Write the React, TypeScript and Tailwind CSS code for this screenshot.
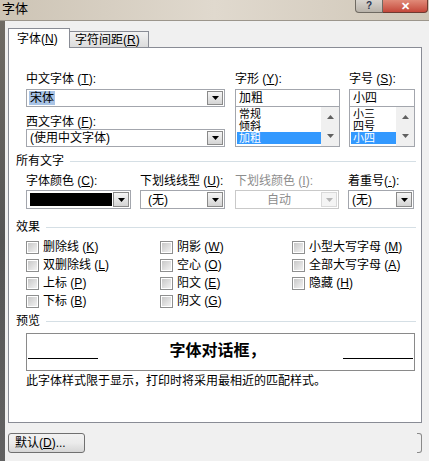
import type { ReactNode } from "react"

function Key({ k }: { k: string }) {
  return (
    <span>
      {" "}(<span className="underline">{k}</span>)
    </span>
  )
}

function Arrow({ disabled = false }: { disabled?: boolean }) {
  return (
    <div
      className={`flex h-full w-[16px] items-center justify-center border ${
        disabled
          ? "border-[#d9d9d9] bg-[#f4f4f4]"
          : "border-[#8a8a8a] bg-gradient-to-b from-[#f6f6f6] to-[#d4d4d4]"
      }`}
    >
      <svg width="7" height="4" viewBox="0 0 7 4">
        <path d="M0 0h7L3.5 4z" fill={disabled ? "#b5b5b5" : "#000"} />
      </svg>
    </div>
  )
}

function Combo({
  className,
  children,
  disabled = false,
}: {
  className: string
  children: ReactNode
  disabled?: boolean
}) {
  return (
    <div
      className={`flex items-stretch border bg-white p-px ${
        disabled ? "border-[#c9c9c9]" : "border-[#a3a6ad]"
      } ${className}`}
    >
      <div className="flex min-w-0 flex-1 items-center">{children}</div>
      <Arrow disabled={disabled} />
    </div>
  )
}

function ListBox({ items, selected, className }: { items: string[]; selected: number; className: string }) {
  return (
    <div className={`flex border border-[#a3a6ad] bg-white ${className}`}>
      <div className="flex-1 pt-[1px] pl-px">
        {items.map((it, i) => (
          <div
            key={it}
            className={`h-[12px] pl-[2px] text-[11px] leading-[12px] ${i === selected ? "bg-[#3399ff] text-white" : ""}`}
          >
            {it}
          </div>
        ))}
      </div>
      <div className="flex w-[18px] flex-col items-center justify-between bg-[#f0f0f0] py-[8px]">
        <svg width="7" height="4" viewBox="0 0 7 4">
          <path d="M0 4h7L3.5 0z" fill="#606060" />
        </svg>
        <svg width="7" height="4" viewBox="0 0 7 4">
          <path d="M0 0h7L3.5 4z" fill="#606060" />
        </svg>
      </div>
    </div>
  )
}

function Section({ label }: { label: string }) {
  return (
    <div className="flex h-[14px] items-center">
      <span className="leading-[14px]">{label}</span>
      <div className="ml-[6px] h-px flex-1 bg-[#d5dfe5]" />
    </div>
  )
}

function Check({ label, k }: { label: string; k: string }) {
  return (
    <div className="flex h-[18px] items-center">
      <div className="flex h-[13px] w-[13px] items-center justify-center border border-[#8e8f8f] bg-white">
        <div className="h-[9px] w-[9px] bg-gradient-to-br from-[#c8c8c8] to-[#f2f2f2]" />
      </div>
      <span className="ml-[4px] leading-[14px]">
        {label}
        <Key k={k} />
      </span>
    </div>
  )
}

export default function App() {
  return (
    <div className="relative h-[461px] w-[429px] overflow-hidden bg-[#f0f0f0] font-['Liberation_Sans','Noto_Sans_CJK_SC',sans-serif] text-[12px] text-black">
      {/* title bar */}
      <div className="flex h-[21px] items-start border-b border-[#9c968c] bg-gradient-to-r from-[#cdc4b5] via-[#e0d9ce] to-[#d0c7b8]">
        <span className="mt-[1px] pl-[2px] text-[13px] leading-[16px]">字体</span>
        <div className="ml-auto mr-[1px] flex h-[13px]">
          <div className="flex w-[28px] items-center justify-center rounded-bl-[4px] border border-t-0 border-[#6f6a62] bg-gradient-to-b from-[#d8d4ce] to-[#b9b3aa] text-[10px] font-bold leading-[10px] text-[#2a3550]">
            ?
          </div>
          <div className="flex w-[45px] items-center justify-center rounded-br-[4px] border border-l-0 border-t-0 border-[#6f3a30] bg-gradient-to-b from-[#e08a78] to-[#c4473a] text-[11px] font-bold leading-[10px] text-white">
            ✕
          </div>
        </div>
      </div>

      <div className="flex h-[440px]">
        <div className="w-[5px] bg-gradient-to-b from-[#6f6b64] via-[#555555] to-[#626262]" />
        <div className="flex-1 pl-[3px]">
          {/* tabs */}
          <div className="relative z-10 mt-[7px] flex h-[20px] items-end">
            <div className="flex h-[20px] w-[62px] items-center border border-b-0 border-[#898c95] bg-white pl-[8px] leading-[14px]">
              字体<Key k="N" />
            </div>
            <div className="flex h-[17px] w-[79px] items-center border border-l-0 border-[#898c95] bg-gradient-to-b from-[#f2f2f2] to-[#dcdcdc] pl-[5px] leading-[14px]">
              字符间距<Key k="R" />
            </div>
          </div>

          {/* panel */}
          <div className="-mt-px h-[376px] w-[414px] border border-[#898c95] bg-white pr-[5px] pl-[7px] pt-[24px]">
            <div className="ml-[10px] flex">
              <div className="w-[199px]">
                <div className="leading-[14px]">
                  中文字体<Key k="T" />:
                </div>
                <Combo className="mt-[3px] h-[18px] w-[199px]">
                  <span className="ml-px bg-[#a9c4e6] px-[1px] leading-[14px]">宋体</span>
                </Combo>
                <div className="mt-[8px] leading-[14px]">
                  西文字体<Key k="F" />:
                </div>
                <Combo className="h-[18px] w-[199px]">
                  <span className="ml-[2px] leading-[14px]">(使用中文字体)</span>
                </Combo>
              </div>
              <div className="ml-[10px] w-[105px]">
                <div className="leading-[14px]">
                  字形<Key k="Y" />:
                </div>
                <div className="mt-[3px] flex h-[17px] items-center border border-b-0 border-[#a3a6ad] bg-white pl-[3px]">
                  加粗
                </div>
                <ListBox className="h-[41px]" items={["常规", "倾斜", "加粗"]} selected={2} />
              </div>
              <div className="ml-[9px] w-[66px]">
                <div className="leading-[14px]">
                  字号<Key k="S" />:
                </div>
                <div className="mt-[3px] flex h-[17px] items-center border border-b-0 border-[#a3a6ad] bg-white pl-[3px]">
                  小四
                </div>
                <ListBox className="h-[41px]" items={["小三", "四号", "小四"]} selected={2} />
              </div>
            </div>

            <div className="mt-[7px]">
              <Section label="所有文字" />
            </div>
            <div className="mt-[6px] ml-[10px] flex">
              <div className="w-[105px]">
                <div className="leading-[14px]">
                  字体颜色<Key k="C" />:
                </div>
                <Combo className="mt-[2px] h-[19px] w-[105px]">
                  <div className="ml-[2px] h-[13px] w-[82px] bg-black" />
                </Combo>
              </div>
              <div className="ml-[9px] w-[85px]">
                <div className="leading-[14px]">
                  下划线线型<Key k="U" />:
                </div>
                <Combo className="mt-[2px] h-[19px] w-[85px]">
                  <span className="ml-[6px] leading-[14px]">(无)</span>
                </Combo>
              </div>
              <div className="ml-[10px] w-[104px]">
                <div className="leading-[14px] text-[#8d8d8d]">
                  下划线颜色<Key k="I" />:
                </div>
                <Combo disabled className="mt-[2px] h-[19px] w-[104px]">
                  <span className="w-full text-center leading-[14px] text-[#8d8d8d]">自动</span>
                </Combo>
              </div>
              <div className="ml-[9px] w-[66px]">
                <div className="leading-[14px]">
                  着重号(<span className="underline">·</span>):
                </div>
                <Combo className="mt-[2px] h-[19px] w-[66px]">
                  <span className="ml-[2px] leading-[14px]">(无)</span>
                </Combo>
              </div>
            </div>

            <div className="mt-[11px]">
              <Section label="效果" />
            </div>
            <div className="mt-[4px] ml-[10px] flex">
              <div className="w-[134px]">
                <Check label="删除线" k="K" />
                <Check label="双删除线" k="L" />
                <Check label="上标" k="P" />
                <Check label="下标" k="B" />
              </div>
              <div className="w-[132px]">
                <Check label="阴影" k="W" />
                <Check label="空心" k="O" />
                <Check label="阳文" k="E" />
                <Check label="阴文" k="G" />
              </div>
              <div>
                <Check label="小型大写字母" k="M" />
                <Check label="全部大写字母" k="A" />
                <Check label="隐藏" k="H" />
              </div>
            </div>

            <div className="mt-[4px]">
              <Section label="预览" />
            </div>
            <div className="mt-[5px] ml-[10px] flex h-[38px] w-[389px] items-start border border-[#8a8a8a] px-px">
              <div className="mt-[24px] h-px w-[70px] bg-black" />
              <div className="mt-[7px] flex-1 pr-[6px] text-center text-[16px] leading-[20px] font-bold">字体对话框，</div>
              <div className="mt-[24px] h-px w-[70px] bg-black" />
            </div>
            <div className="mt-[3px] ml-[10px] leading-[14px]">此字体样式限于显示，打印时将采用最相近的匹配样式。</div>
          </div>

          {/* bottom buttons */}
          <div className="mt-[10px] flex">
            <div className="flex h-[20px] w-[77px] items-center rounded-[3px] border border-[#707070] bg-gradient-to-b from-[#f2f2f2] via-[#ebebeb] to-[#d6d6d6] pl-[6px] leading-[14px]">
              默认<Key k="D" />...
            </div>
            <div className="ml-[332px] h-[20px] w-[5px] rounded-r-[3px] border border-l-0 border-[#8a8a8a]" />
          </div>
        </div>
      </div>
    </div>
  )
}
